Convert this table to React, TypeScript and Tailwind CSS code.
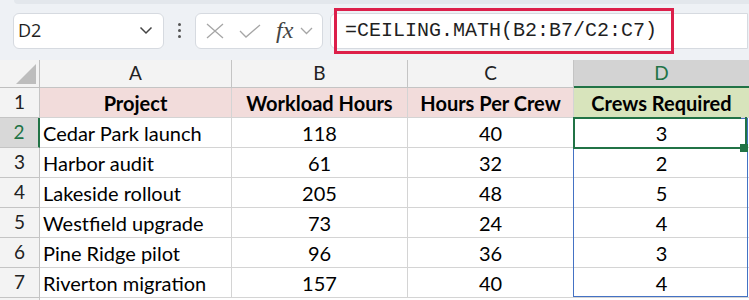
import React from "react";

const rows = [
  ["Cedar Park launch", "118", "40", "3"],
  ["Harbor audit", "61", "32", "2"],
  ["Lakeside rollout", "205", "48", "5"],
  ["Westfield upgrade", "73", "24", "4"],
  ["Pine Ridge pilot", "96", "36", "3"],
  ["Riverton migration", "157", "40", "4"],
];

const cellFont = { fontFamily: "Lato, 'Open Sans', sans-serif" };

export default function App() {
  return (
    <div className="w-[749px] h-[300px] overflow-hidden bg-white relative" style={cellFont}>
      {/* toolbar */}
      <div className="h-[60px] bg-[#eef1f5] relative">
        <div className="h-[4px] ml-[14px] bg-[#e3e7ec] rounded-bl-[6px]" />
        <div className="flex items-center h-[56px] pb-[3px]">
          <div className="ml-[13px] w-[151px] h-[36px] bg-white border border-[#d6dae0] rounded-[6px] flex items-center justify-between pl-[4px] pr-[10px]">
            <span className="text-[18px] text-[#1f1f1f]" style={{ fontFamily: "'Open Sans', sans-serif" }}>D2</span>
            <svg width="14" height="9" viewBox="0 0 14 9"><path d="M1.5 1.5 L7 7 L12.5 1.5" fill="none" stroke="#444" strokeWidth="1.5" /></svg>
          </div>
          <div className="w-[31px] flex flex-col items-center gap-[3px]">
            <div className="w-[3px] h-[3px] bg-[#555] rounded-full" />
            <div className="w-[3px] h-[3px] bg-[#555] rounded-full" />
            <div className="w-[3px] h-[3px] bg-[#555] rounded-full" />
          </div>
          <div className="w-[128px] h-[36px] bg-white border border-[#d6dae0] rounded-[6px] flex items-center pl-[10px]">
            <svg width="18" height="16" viewBox="0 0 18 16"><path d="M1 1 L17 15 M17 1 L1 15" stroke="#a6a6a6" strokeWidth="1.3" fill="none" /></svg>
            <svg className="ml-[15px]" width="22" height="14" viewBox="0 0 22 14"><path d="M1 7 L7 13 L21 1" stroke="#a6a6a6" strokeWidth="1.3" fill="none" /></svg>
            <span className="ml-[15px] text-[24px] italic text-[#444] leading-none pb-[2px]" style={{ fontFamily: "'Liberation Serif', serif" }}>fx</span>
            <svg className="ml-[7px]" width="13" height="8" viewBox="0 0 13 8"><path d="M1 1 L6.5 6.5 L12 1" fill="none" stroke="#a6a6a6" strokeWidth="1.3" /></svg>
          </div>
          <div className="ml-[7px] w-[418px] h-[36px] bg-white border border-[#d6dae0] rounded-l-[6px] relative">
            <div className="absolute left-[3px] top-[-6px] w-[340px] h-[46px] border-[3px] border-[#dc1f4a] flex items-center pl-[8px]">
              <span className="text-[20px] text-[#1f1f1f]" style={{ fontFamily: "'Liberation Mono', monospace" }}>=CEILING.MATH(B2:B7/C2:C7)</span>
            </div>
          </div>
        </div>
      </div>

      {/* grid */}
      <div className="grid grid-cols-[40px_192px_176px_166px_175px] text-[20px] text-black">
        {/* column headers */}
        <div className="h-[28px] bg-[#f3f3f3] border-r border-b border-[#bfbfbf] relative overflow-hidden">
          <svg className="absolute right-[3px] bottom-[3px]" width="20" height="20" viewBox="0 0 20 20"><path d="M20 0 L20 20 L0 20 Z" fill="#bdbdbd" /></svg>
        </div>
        {["A", "B", "C"].map((c) => (
          <div key={c} className="h-[28px] bg-[#f3f3f3] border-r border-b border-[#c4c4c4] flex items-center justify-center text-[#222] text-[19px]">{c}</div>
        ))}
        <div className="h-[28px] bg-[#d3d3d3] border-b-2 border-[#217346] flex items-center justify-center text-[#217346] text-[19px]">D</div>

        {/* row 1 */}
        <div className="h-[30px] bg-[#f3f3f3] border-r border-b border-[#c4c4c4] flex items-center justify-center text-[#222] text-[19px]">1</div>
        {["Project", "Workload Hours", "Hours Per Crew"].map((h) => (
          <div key={h} className="h-[30px] bg-[#f2dcdb] border-r border-b border-[#d4d4d4] flex items-center justify-center font-bold">{h}</div>
        ))}
        <div className="h-[30px] bg-[#d8e4bc] border-b border-[#d4d4d4] flex items-center justify-center font-bold">Crews Required</div>

        {rows.map((r, i) => (
          <React.Fragment key={i}>
            <div className={`h-[30px] border-b flex items-center justify-center text-[19px] ${i === 0 ? "bg-[#d8d8d8] text-[#217346] border-r-2 border-r-[#217346] border-b-[#c4c4c4]" : "bg-[#f3f3f3] text-[#222] border-r border-[#c4c4c4]"}`}>{i + 2}</div>
            <div className="h-[30px] border-r border-b border-[#d4d4d4] flex items-center pl-[3px]">{r[0]}</div>
            <div className="h-[30px] border-r border-b border-[#d4d4d4] flex items-center justify-center">{r[1]}</div>
            <div className="h-[30px] border-r border-b border-[#d4d4d4] flex items-center justify-center">{r[2]}</div>
            <div className="h-[30px] border-b border-[#d4d4d4] flex items-center justify-center">{r[3]}</div>
          </React.Fragment>
        ))}
        <div className="h-[10px] bg-[#f3f3f3] border-r border-[#c4c4c4]" />
      </div>

      {/* selection overlays */}
      <div className="absolute left-[573px] top-[118px] w-[175px] h-[179px] border border-[#4472c4] pointer-events-none" />
      <div className="absolute left-[573px] top-[117px] w-[168px] h-[32px] border-2 border-r-0 border-[#217346] pointer-events-none" />
      <div className="absolute left-[745px] top-[117px] w-[2px] h-[27px] bg-[#217346]" />
      <div className="absolute left-[740px] top-[144px] w-[8px] h-[8px] bg-[#217346]" />
    </div>
  );
}
